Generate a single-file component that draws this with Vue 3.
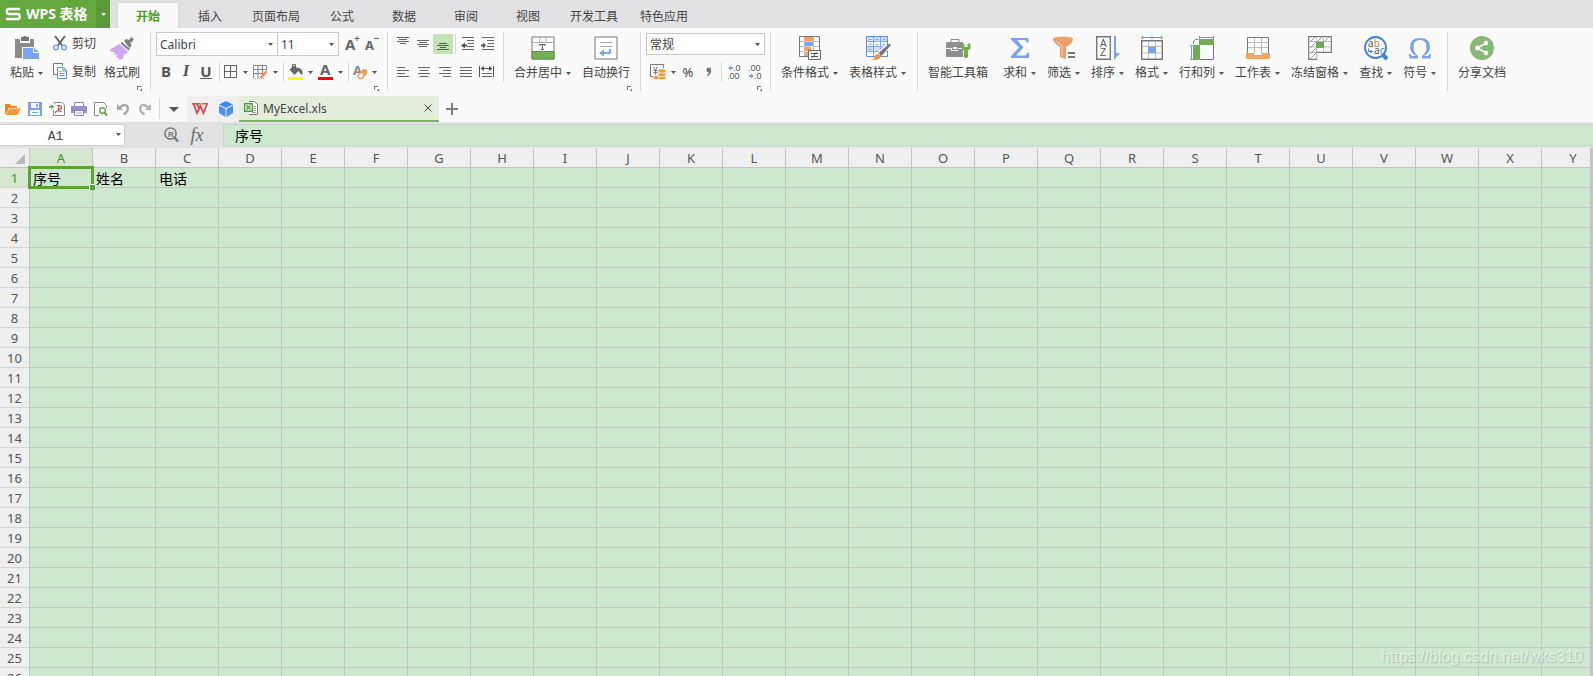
<script setup>
import { h, ref } from 'vue'

const crisp = (s) => `<g shape-rendering="crispEdges">${s}</g>`
const lines = (rows, color = '#666') =>
  crisp(rows.map(([x, y, w]) => `<rect x="${x}" y="${y}" width="${w}" height="1" fill="${color}"/>`).join(''))

const icons = {
  logo: [16, 14, '<path d="M15 2H3.500Q2 2 2 3.500V5.500Q2 7 3.500 7H13Q14.500 7 14.500 8.500V10.500Q14.500 12 13 12H1" fill="none" stroke="#fff" stroke-width="2.400"/>'],
  paste: [24, 24, '<path d="M0 3h5v4h10V3h4v8H7v11H0z" fill="#8b8b8b"/><path d="M6 1h2.500V0h3v1H14v4H6z" fill="#777"/><path d="M8 12h10v5h6v6H8z" fill="#7aa3ef"/><path d="M19 12l5 4h-5z" fill="#7aa3ef"/>'],
  cut: [14, 16, '<path d="M2 1l7.500 10M12 1L4.500 11" stroke="#666" stroke-width="2"/><circle cx="3" cy="12.500" r="2.300" fill="#fafafa" stroke="#7aa3ef" stroke-width="1.500"/><circle cx="11" cy="12.500" r="2.300" fill="#fafafa" stroke="#7aa3ef" stroke-width="1.500"/>'],
  copy: [14, 16, '<path d="M9.500 3V.5h-9v11H4" fill="none" stroke="#777"/><path d="M4.500 4.500h6l3 3v8h-9z" fill="#fff" stroke="#5f8fe0"/><path d="M10 4.500V8h3.500M6.500 8.500h2m-2 2h5m-5 2h5" fill="none" stroke="#5f8fe0"/>'],
  painter: [24, 24, '<path d="M14 5l2-2 3 1 2.500-3L24 3.500 20.500 7l1 3-2 2z" fill="#808080"/><path d="M12 6l8 7-1.500 1.500-8-7z" fill="#808080"/><path d="M9.500 8l8.500 7.500-2.500 3L14 18l-1 4.500L9.500 24 8 21l-2 1 1-4-3 1 .5-3L1 16l-1-2.500z" fill="#cfa6f1"/>'],
  fontUp: [16, 18, '<text x="0" y="15" font-size="15" font-weight="bold" font-family="Noto Sans" fill="#666">A</text><path d="M9.500 3.500h5M12 1v5" stroke="#666" stroke-width="1"/>'],
  fontDown: [16, 18, '<text x="0" y="15" font-size="13" font-weight="bold" font-family="Noto Sans" fill="#666">A</text><path d="M9 3.500h5" stroke="#666"/>'],
  borders: [14, 14, crisp('<path d="M.5.500h12v12H.5zM6.500 1v12M0 6.500h13" fill="none" stroke="#666"/>')],
  tablePen: [15, 14, '<path d="M13.500 5V.5H.5v12.500M5 1v12M9.500 1v9M0 4.500h13M0 8.500h9" fill="none" stroke="#888"/><path d="M2 13.500h9" stroke="#ef8a4b" stroke-dasharray="1 1"/><path d="M14 7l-4.500 5-2 .5.8-2L13 6z" fill="#ef8a4b" stroke="#ef8a4b"/>'],
  fill: [15, 16, '<path d="M1.500 5.500L6 1.500l5.500 4.500-5 5z" fill="#666"/><path d="M4.500 4V.5h3V4" fill="none" stroke="#666"/><path d="M9 3.500Q14 4 14.500 8t-2 2L10 6z" fill="#666"/><path d="M0 13h15v3H0z" fill="#ff0"/>'],
  fontColor: [15, 16, '<text x="2" y="11" font-size="15" font-weight="bold" font-family="Noto Sans" fill="#666">A</text><path d="M0 13h15v3H0z" fill="#f60808"/>'],
  eraser: [14, 16, '<text x="0" y="11" font-size="13" font-family="Noto Sans" font-weight="bold" fill="#888">A</text><path d="M5 11.500l5-5.500h3.500v3L9 14.500H6.500L5 13z" fill="#fafafa" stroke="#eda04c" stroke-width="1.300"/><path d="M8 8.500l3 3 2.500-2.500V6H10z" fill="#eda04c"/>'],
  top: [14, 14, lines([[1, 0, 12], [3, 2, 8], [1, 4, 12], [4, 6, 6]])],
  middle: [14, 14, lines([[1, 3, 12], [3, 5, 8], [1, 7, 12], [3, 9, 8]])],
  bottom: [14, 14, lines([[3, 6, 8], [1, 8, 12], [4, 10, 6], [1, 12, 12]], '#4d6b42')],
  outdent: [14, 14, lines([[1, 0, 12], [6, 3, 7], [7, 6, 6], [6, 9, 7], [1, 12, 12]]) + '<path d="M0 8.500l4-3v2h2v2H4v2z" fill="#555"/>'],
  indent: [14, 14, lines([[1, 0, 12], [6, 3, 7], [7, 6, 6], [6, 9, 7], [1, 12, 12]]) + '<path d="M5 8.500l-3-3v2H0v2h2v2z" fill="#555"/>'],
  left: [14, 14, lines([[1, 2, 8], [1, 5, 12], [1, 8, 8], [1, 11, 12]])],
  center: [14, 14, lines([[1, 2, 12], [3, 5, 8], [1, 8, 12], [3, 11, 8]])],
  right: [14, 14, lines([[1, 2, 12], [5, 5, 8], [1, 8, 12], [5, 11, 8]])],
  justify: [14, 14, lines([[1, 2, 12], [1, 5, 12], [1, 8, 12], [1, 11, 12]])],
  spread: [16, 14, lines([[3, 8, 10], [3, 11, 10]]) + '<path d="M.5 1v11M14.500 1v11M3 3.500h9" stroke="#555"/><path d="M1.500 3.500L5 1v5zM13.500 3.500L10 1v5z" fill="#555"/>'],
  merge: [24, 24, '<path d="M1 1h22v22H1z" fill="#fff" stroke="#777"/><path d="M1 6.500h22M9 1v5.500M15 1v5.500" stroke="#aaa"/><path d="M1 15.500h22V23H1z" fill="#77b058" stroke="#5d9344"/><path d="M9 10V8.500h5V10M11.500 8.500v5M10 13.500h3" fill="none" stroke="#666" stroke-width="1.200"/>'],
  wrap: [24, 24, '<path d="M1 1h22v22H1z" fill="#fff" stroke="#777"/><path d="M6 6.500h12M6 10.500h12" stroke="#aaa"/><path d="M16 13v4h-6" fill="none" stroke="#7aa3ef" stroke-width="2"/><path d="M5 17l5-3.500v7z" fill="#7aa3ef"/>'],
  currency: [16, 16, '<path d="M3 12.500H.5V.5h13V4" fill="none" stroke="#777"/><path d="M3.500 3l2 3 2-3M5.500 6v4.500M3.500 6.500h4M3.500 8.500h4" fill="none" stroke="#777"/><g fill="#ee9c38" stroke="#fafafa" stroke-width=".7"><rect x="8" y="11.500" width="8" height="4" rx="2"/><rect x="3" y="11.500" width="6" height="4" rx="2"/><rect x="8" y="8.500" width="8" height="4" rx="2"/><rect x="8" y="5" width="8" height="4" rx="2"/></g>'],
  comma: [6, 10, '<circle cx="2.800" cy="3" r="2.400" fill="#777"/><path d="M5.200 3Q5.500 7 1.500 9L1 8q2-1.500 2-3z" fill="#777"/>'],
  decMore: [12, 16, '<path d="M0 4l3-2.500V3h2v2H3v1.500z" fill="#7aa3ef"/><text font-size="9" font-family="Liberation Sans" fill="#555"><tspan x="5" y="7">.0</tspan><tspan x="-1" y="15">.00</tspan></text>'],
  decLess: [12, 16, '<path d="M5 12L2 9.500V11H0v2h2v1.500z" fill="#7aa3ef"/><text font-size="9" font-family="Liberation Sans" fill="#555"><tspan x="-1" y="7">.00</tspan><tspan x="5" y="15">.0</tspan></text>'],
  cond: [22, 24, '<path d="M.5.5h20v20H.5z" fill="#fff" stroke="#777"/><path d="M6 1h8v4H6zM6 10.500h6V15H6zM6 16h3v4H6z" fill="#f5a05f"/><path d="M6 5.500h8V10H6z" fill="#79a6f6"/><path d="M5.500 1v19M14.500 1v19M1 5.500h5M14 5.500h6M1 10.500h5M14 10.500h6M1 15.500h5" stroke="#bbb"/><path d="M9.500 14.500h12v9h-12z" fill="#fff" stroke="#666"/><path d="M12 17.500h7M12 20.500h7M17.500 16l-4 6" stroke="#555"/>'],
  tableStyle: [24, 24, '<path d="M.5.500h21v20H.5z" fill="#fff" stroke="#5b8ee6"/><path d="M1 1h20v5H1zM1 11h20v5H1z" fill="#cfe0fb"/><path d="M7.500 1v19M14.500 1v19M1 5.500h20M1 10.500h20M1 15.500h20" stroke="#7fa7ea"/><path d="M2.500 3.500h3M9.500 3.500h3M16.500 3.500h3M2.500 8.500h3M9.500 8.500h3M16.500 8.500h3M2.500 13.500h3" stroke="#7fa7ea"/><path d="M22 10l-8 8" stroke="#fafafa" stroke-width="6"/><path d="M23.500 7.500L25 9l-9.500 11-3-3z" fill="#777"/><path d="M12 17.500l3 3q-2.500 4.500-9 3 3-1 3-4z" fill="#ee9342"/>'],
  toolbox: [24, 24, '<path d="M5 6V3.500h8V6" fill="none" stroke="#888"/><path d="M1 6h16v6H0V7zM0 13h5v2h7v-2h5v8H0z" fill="#8f8f8f"/><path d="M6.500 10.500h5v3h-5z" fill="#fff" stroke="#888"/><path d="M16 8v4.500l2.500 2V21q1.500 1.500 3 0v-6.500l2.500-2V8h-2v3.500h-4V8z" fill="#6fb046" stroke="#6fb046"/>'],
  sum: [18, 24, '<path d="M0 2h17.500v4.500H16Q15.500 4 13 4H6l6.500 7.500L5 19.500h8.500q2.500 0 3-3H18V22H0v-2l8-8.500L0 3.500z" fill="#7aa3ef"/>'],
  filter: [22, 24, '<ellipse cx="10" cy="3" rx="10" ry="2.500" fill="#eda069"/><path d="M0 3q0 4 7 8v10l6 2V11q7-4 7-8z" fill="#eda069"/><path d="M3 5l6 5v10" fill="none" stroke="#f8cfae" stroke-width="1"/><path d="M15 16h7v2h-7zM15 20h7v2h-7z" fill="#777"/>'],
  sort: [24, 24, '<path d="M.7.700h13.600v22.600H.7z" fill="#fff" stroke="#777" stroke-width="1.400"/><text font-size="10" font-family="Liberation Sans" fill="#555"><tspan x="4" y="11">A</tspan><tspan x="4" y="20">Z</tspan></text><path d="M18 0h2v17h4l-6 7z" fill="#7aa3ef"/>'],
  format: [22, 24, '<path d="M0 1.500h22M1.500 0v3M11 0v3M20.500 0v3" stroke="#6c98e8"/><path d="M.7 4.700h20.600v18.600H.7z" fill="#fff" stroke="#777" stroke-width="1.400"/><path d="M7.500 5v18M14.500 5v18M1 10.500h20M1 17h20" stroke="#bbb"/><path d="M7 11h8v6H7z" fill="#76a2f2"/>'],
  rowcol: [24, 24, '<path d="M9 1.500h15M9.500 0v3M23.500 0v3M1.500 9v15M0 9.500h3M0 23.500h3" stroke="#6c98e8"/><path d="M3.500 8V5.500L5.500 3.500H8M10 23.500h13.500V8" fill="none" stroke="#777"/><path d="M9 3h15v6H9zM3 9h7v15H3z" fill="#6fac52"/>'],
  sheet: [24, 24, '<path d="M1.500 17V1.500h21V17" fill="#fff" stroke="#777"/><path d="M2 6.500h20M2 11.500h20M8.500 2v16M15.500 2v16" stroke="#bbb"/><path d="M0 17h8v2h8v-2h8v5l-1 1H1l-1-1z" fill="#f1a368"/>'],
  freeze: [24, 24, '<path d="M.7.700h22.600v15.600H8.500v7H.7z" fill="#fff" stroke="#777" stroke-width="1.200"/><path d="M1 5.500h22M1 11h22M1 16.500h8M8.500 1v22M15.500 1v15" stroke="#bbb"/><path d="M2 6l5-5M9 6l5-5M16 6l5-5M2 12l6-6M2 18l6-6M2 23l6-6" stroke="#888" stroke-width=".8"/><path d="M8 6h8v6H8z" fill="#6fa654"/>'],
  find: [24, 24, '<path d="M18 18l5 5" stroke="#3f7fd0" stroke-width="4"/><circle cx="11.500" cy="11.500" r="10.500" fill="#fff" stroke="#3f7fd0" stroke-width="1.800"/><text font-size="10" font-family="Noto Sans" fill="#555"><tspan x="4" y="11">a</tspan><tspan fill="#d57a38">b</tspan><tspan x="10" y="18">a</tspan><tspan fill="#3f7fd0">c</tspan></text><path d="M4.500 12.500v3H7" fill="none" stroke="#3f7fd0"/><path d="M9 15.500l-2.500-2v4z" fill="#3f7fd0"/>'],
  omega: [22, 24, '<path d="M0 18h1.500q.5 2 2 2H7Q1 16.500 1 11 1 2 11 2t10 9q0 5.500-6 9h3.500q1.500 0 2-2H22l-.5 4.500H13V20q4.500-3 4.500-9 0-7-6.500-7T4.500 11q0 6 4.500 9v2.500H.5z" fill="#7aa3ef"/>'],
  share: [24, 24, '<circle cx="12" cy="12" r="12" fill="#89b777"/><path d="M16 7L7.500 12 16 17" fill="none" stroke="#fff" stroke-width="1.500"/><circle cx="16" cy="7" r="2.200" fill="#fff"/><circle cx="7.500" cy="12" r="2.500" fill="#fff"/><circle cx="16" cy="17" r="2.200" fill="#fff"/>'],
  open: [16, 14, '<path d="M0 2h5l1 2h6v2H4L1 12H0z" fill="#e88a26"/><path d="M4.500 6.500H16L12.500 13H1z" fill="#f39b3b"/>'],
  save: [14, 14, '<path d="M0 0h14v14H0z" fill="#7ba3e8"/><path d="M3 1h8v5H3zM2 8h10v5H2z" fill="#fff"/><path d="M8 2h2v3H8z" fill="#7ba3e8"/><path d="M4 10.500h6" stroke="#7ba3e8"/>'],
  pdf: [16, 14, '<path d="M5.500 2V.5H13l2.500 2.500v10.500H4.500V8" fill="#fff" stroke="#888"/><path d="M0 4h2.500V2L5 4.800 2.500 7.500v-2H0z" fill="#5f9d46"/><path d="M8 3.500h2.500q2 0 2 1.800t-2 1.800H9.500M10 4l-1 5M7 11.500q-1.500-2 1.500-2.500t4 1" fill="none" stroke="#cc4b46" stroke-width="1.200"/>'],
  print: [16, 14, '<path d="M3.500.5h9v4h-9z" fill="#fff" stroke="#8c86c4"/><path d="M0 4h16v7H0z" fill="#9690cf"/><path d="M3.500 8.500h9v5h-9z" fill="#fff" stroke="#8c86c4"/><path d="M5 11h6" stroke="#aaa"/>'],
  preview: [14, 14, '<path d="M5 13.500H.5V.5h9l3 3V6" fill="#fff" stroke="#888"/><circle cx="8.500" cy="8.500" r="2.800" fill="#fff" stroke="#6aa64d" stroke-width="1.400"/><path d="M10.500 10.500L13 13.500" stroke="#6aa64d" stroke-width="2"/>'],
  undo: [12, 14, '<path d="M3 5.500Q8.500.5 10.500 5 12 9.500 6.500 12.500" fill="none" stroke="#a5a5a5" stroke-width="2.400"/><path d="M0 2v6h6z" fill="#a5a5a5"/>'],
  redo: [12, 14, '<path d="M9 5.500Q3.500.5 1.500 5 0 9.500 5.500 12.500" fill="none" stroke="#b0b0b0" stroke-width="2.400"/><path d="M12 2v6H6z" fill="#b0b0b0"/>'],
  wps: [16, 12, '<path d="M0 .8h8.500M10 .8h6" stroke="#e2474a" stroke-width="1.600"/><path d="M1.500 1l3.500 9L8.500 3l3 7L15 1M5 1l2.500 5" fill="none" stroke="#e2474a" stroke-width="1.800"/>'],
  cube: [14, 16, '<path d="M7 0l7 3.500L7 7 0 3.500z" fill="#3e8bf0"/><path d="M0 4.500L6.500 8v8L0 12zM14 4.500L7.500 8v8l6.500-4z" fill="#4a90f5"/>'],
  xls: [14, 14, '<path d="M5 .5h5.500l3 3v10H5" fill="#fff" stroke="#777"/><path d="M9.500 5.500h2.500m-2.500 2h2.500m-2.500 2h2.500m-4 2h4" stroke="#999"/><path d="M.7 2.700h7.600v7.600H.7z" fill="#fff" stroke="#4f9a38" stroke-width="1.400"/><path d="M2.500 4.500l4 4M6.500 4.500l-4 4" stroke="#4f9a38" stroke-width="1.500"/>'],
  close: [8, 8, '<path d="M.5.500l7 7M7.500.500l-7 7" stroke="#444"/>'],
  plus: [12, 12, '<path d="M0 6h12M6 0v12" stroke="#808080" stroke-width="2"/>'],
  search: [15, 15, '<path d="M10 10l4 4.500" stroke="#777" stroke-width="2.400"/><circle cx="6.500" cy="6.500" r="5.600" fill="none" stroke="#777" stroke-width="1.500"/><text x="4" y="10" font-size="8" font-weight="bold" font-family="Liberation Sans" fill="#777">R</text>'],
  launch: [5, 5, crisp('<path d="M.5 4V.5H4" fill="none" stroke="#777"/><path d="M5 2v3H2z" fill="#777"/>')],
  arrow: [5, 3, '<path d="M0 0h5L2.500 3z" fill="#555"/>'],
  bigArrow: [10, 5, '<path d="M0 0h10L5 5z" fill="#555"/>'],
  corner: [10, 10, '<path d="M10 0v10H0z" fill="#b8b8b8"/>'],
}

const Icon = ({ name }) => {
  const [w, ht, body] = icons[name]
  return h('svg', { width: w, height: ht, viewBox: `0 0 ${w} ${ht}`, 'aria-hidden': 'true', class: 'icon', innerHTML: body })
}
Icon.props = ['name']

const tabs = ['开始', '插入', '页面布局', '公式', '数据', '审阅', '视图', '开发工具', '特色应用']
const activeTab = ref('开始')

const fontTools = [
  { icon: 'borders', title: '边框' },
  { icon: 'tablePen', title: '绘图边框' },
  { sep: true },
  { icon: 'fill', title: '填充颜色' },
  { icon: 'fontColor', title: '字体颜色' },
  { sep: true },
  { icon: 'eraser', title: '清除' },
]
const styleTools = [
  { icon: 'cond', label: '条件格式' },
  { icon: 'tableStyle', label: '表格样式' },
]
const editTools = [
  { icon: 'sum', label: '求和' },
  { icon: 'filter', label: '筛选' },
  { icon: 'sort', label: '排序' },
  { icon: 'format', label: '格式' },
  { icon: 'rowcol', label: '行和列' },
  { icon: 'sheet', label: '工作表' },
  { icon: 'freeze', label: '冻结窗格' },
  { icon: 'find', label: '查找' },
  { icon: 'omega', label: '符号' },
]
const quick = ['open', 'save', 'pdf', 'print', 'preview', 'undo', 'redo']
const aligns = ['left', 'center', 'right', 'justify', 'spread']

const columns = Array.from({ length: 25 }, (_, i) => String.fromCharCode(65 + i))
const rowCount = 26
const cells = { A1: '序号', B1: '姓名', C1: '电话' }
const nameBox = ref('A1')
const formula = ref('序号')
</script>

<template>
  <div class="app">
    <header class="titlebar">
      <button class="brand"><Icon name="logo" /><span>WPS 表格</span></button>
      <button class="brand-menu" aria-label="菜单"><Icon name="arrow" /></button>
      <nav class="tabs">
        <button v-for="t in tabs" :key="t" class="tab" :class="{ active: t === activeTab }" @click="activeTab = t">{{ t }}</button>
      </nav>
    </header>

    <section class="ribbon">
      <div class="group clipboard">
        <button class="big"><Icon name="paste" /><span class="cap">粘贴<Icon name="arrow" /></span></button>
        <div class="stack">
          <button class="small"><Icon name="cut" /><span>剪切</span></button>
          <button class="small"><Icon name="copy" /><span>复制</span></button>
        </div>
        <button class="big"><Icon name="painter" /><span class="cap">格式刷</span></button>
        <button class="launch" aria-label="剪贴板设置"><Icon name="launch" /></button>
      </div>

      <div class="group font">
        <div class="row first">
          <span class="combo family"><select aria-label="字体"><option>Calibri</option></select><Icon name="arrow" /></span>
          <span class="combo size"><select aria-label="字号"><option>11</option></select><Icon name="arrow" /></span>
          <button class="grow" aria-label="增大字号"><Icon name="fontUp" /></button>
          <button class="shrink" aria-label="减小字号"><Icon name="fontDown" /></button>
        </div>
        <div class="row tools">
          <div class="biu">
            <button class="bold">B</button><button class="italic">I</button><button class="underline">U</button>
          </div>
          <i class="sep" />
          <template v-for="(t, i) in fontTools" :key="i">
            <i v-if="t.sep" class="sep" />
            <button v-else class="drop" :aria-label="t.title"><Icon :name="t.icon" /><Icon name="arrow" /></button>
          </template>
        </div>
        <button class="launch" aria-label="字体设置"><Icon name="launch" /></button>
      </div>

      <div class="group align short">
        <div class="row first">
          <button class="cell-btn" aria-label="顶端对齐"><Icon name="top" /></button>
          <button class="cell-btn" aria-label="垂直居中"><Icon name="middle" /></button>
          <button class="cell-btn on" aria-label="底端对齐"><Icon name="bottom" /></button>
          <i class="sep" />
          <button class="cell-btn" aria-label="减少缩进"><Icon name="outdent" /></button>
          <button class="cell-btn" aria-label="增加缩进"><Icon name="indent" /></button>
        </div>
        <div class="row second">
          <button v-for="a in aligns" :key="a" class="cell-btn wide" :aria-label="a"><Icon :name="a" /></button>
        </div>
      </div>

      <div class="group merge">
        <button class="big"><Icon name="merge" /><span class="cap">合并居中<Icon name="arrow" /></span></button>
        <button class="big"><Icon name="wrap" /><span class="cap">自动换行</span></button>
        <button class="launch" aria-label="对齐设置"><Icon name="launch" /></button>
      </div>

      <div class="group number">
        <div class="row first">
          <span class="combo numfmt"><select aria-label="数字格式"><option>常规</option></select><Icon name="arrow" /></span>
        </div>
        <div class="row number-tools">
          <button class="drop" aria-label="货币"><Icon name="currency" /><Icon name="arrow" /></button>
          <button class="percent">%</button>
          <button class="comma" aria-label="千位分隔"><Icon name="comma" /></button>
          <i class="sep" />
          <button class="dec" aria-label="增加小数位"><Icon name="decMore" /></button>
          <button class="dec" aria-label="减少小数位"><Icon name="decLess" /></button>
        </div>
        <button class="launch" aria-label="数字设置"><Icon name="launch" /></button>
      </div>

      <div class="group styles">
        <button v-for="t in styleTools" :key="t.label" class="big"><Icon :name="t.icon" /><span class="cap">{{ t.label }}<Icon name="arrow" /></span></button>
      </div>

      <div class="group edit">
        <button class="big toolbox"><Icon name="toolbox" /><span class="cap">智能工具箱</span></button>
        <button v-for="t in editTools" :key="t.label" class="big"><Icon :name="t.icon" /><span class="cap">{{ t.label }}<Icon name="arrow" /></span></button>
      </div>

      <div class="group share">
        <button class="big"><Icon name="share" /><span class="cap">分享文档</span></button>
      </div>
    </section>

    <div class="docbar">
      <div class="quick">
        <button v-for="q in quick" :key="q" :aria-label="q"><Icon :name="q" /></button>
      </div>
      <i class="sep" />
      <button class="more" aria-label="更多"><Icon name="bigArrow" /></button>
      <div class="pinned">
        <button aria-label="WPS"><Icon name="wps" /></button>
        <button aria-label="应用"><Icon name="cube" /></button>
      </div>
      <div class="doc">
        <Icon name="xls" /><span>MyExcel.xls</span>
        <button aria-label="关闭"><Icon name="close" /></button>
      </div>
      <button class="add" aria-label="新建"><Icon name="plus" /></button>
    </div>

    <div class="formula-bar">
      <div class="namebox">
        <input v-model="nameBox" aria-label="名称框" />
        <button aria-label="名称列表"><Icon name="arrow" /></button>
      </div>
      <button class="lookup" aria-label="浏览"><Icon name="search" /></button>
      <button class="fx">fx</button>
      <input v-model="formula" class="formula" aria-label="编辑栏" />
    </div>

    <main class="sheet">
      <div class="viewport">
        <table>
          <thead>
            <tr>
              <th class="corner"><Icon name="corner" /></th>
              <th v-for="c in columns" :key="c" :class="{ current: c === 'A' }">{{ c }}</th>
            </tr>
          </thead>
          <tbody>
            <tr v-for="r in rowCount" :key="r">
              <th :class="{ current: r === 1 }">{{ r }}</th>
              <td v-for="c in columns" :key="c" :class="{ selected: c + r === 'A1' }">{{ cells[c + r] }}</td>
            </tr>
          </tbody>
        </table>
      </div>
      <div class="edge" />
      <div class="watermark">https://blog.csdn.net/wks310</div>
    </main>
  </div>
</template>

<style>
body {
  overflow: hidden;
}
</style>

<style scoped>
.app {
  display: flex;
  flex-direction: column;
  height: 100vh;
  background: #fafafa;
  color: #444;
  font: 12px/16px 'Noto Sans', 'Noto Sans CJK SC', sans-serif;
}
button,
input,
select {
  margin: 0;
  padding: 0;
  border: 0;
  background: none;
  color: inherit;
  font: inherit;
  appearance: none;
  outline: none;
  border-radius: 0;
}
button {
  display: flex;
  align-items: center;
  justify-content: center;
  white-space: nowrap;
  flex: none;
}
.icon {
  display: block;
  flex: none;
  overflow: visible;
}
.sep {
  flex: none;
  width: 1px;
  height: 20px;
  background: #d8d8d8;
}

.titlebar {
  display: flex;
  flex: none;
  height: 28px;
  background: #e2e2e4;
}
.brand {
  width: 96px;
  padding-left: 5px;
  gap: 5px;
  justify-content: flex-start;
  background: #64a83f;
  color: #fff;
  font-size: 14px;
  font-weight: bold;
}
.brand-menu {
  width: 14px;
  margin-right: 8px;
  background: #5b9a3a;
}
.brand-menu :deep(path) {
  fill: #fff;
}
.tabs {
  display: flex;
  padding-top: 3px;
}
.tab {
  min-width: 62px;
  padding: 2px 11px 0;
}
.tab.active {
  min-width: 60px;
  margin-right: 1px;
  background: #fafafa;
  box-shadow: 0 0 2px #c4c4c4;
  clip-path: inset(-2px -2px 0 -2px);
  color: #4a9a25;
  font-weight: bold;
}

.ribbon {
  display: flex;
  flex: none;
  height: 68px;
}
.group {
  position: relative;
  display: flex;
  flex: none;
  box-sizing: border-box;
  height: 68px;
  padding-top: 4px;
}
.group::after {
  content: '';
  position: absolute;
  top: 4px;
  right: 0;
  width: 1px;
  height: 59px;
  background: #d8d8d8;
}
.group.short::after {
  height: 50px;
}
.group.share::after {
  display: none;
}
.big {
  flex-direction: column;
  justify-content: flex-start;
  gap: 5px;
  height: 49px;
  padding-top: 4px;
}
.cap {
  display: flex;
  align-items: center;
  gap: 4px;
}
.clipboard {
  width: 151px;
  padding-left: 10px;
}
.stack {
  display: flex;
  flex-direction: column;
  gap: 12px;
  padding-top: 3px;
  margin: 0 8px 0 10px;
}
.small {
  gap: 5px;
  height: 16px;
}
.small span {
  padding-top: 2px;
}
.launch {
  position: absolute;
  right: 9px;
  bottom: 5px;
}
.font,
.align,
.number {
  flex-direction: column;
  gap: 6px;
}
.row {
  display: flex;
  align-items: center;
  height: 20px;
}
.row.first {
  height: 24px;
}
.font {
  width: 237px;
  padding-left: 5px;
}
.combo {
  display: flex;
  align-items: center;
  box-sizing: border-box;
  height: 24px;
  padding-right: 4px;
  border: 1px solid #c8c8c8;
  background: #fff;
}
.combo select {
  flex: 1;
  min-width: 0;
  height: 22px;
  padding: 2px 0 0 3px;
  font-size: 12px;
}
.family {
  width: 122px;
}
.size {
  width: 62px;
  margin-left: -1px;
}
.grow {
  margin-left: 6px;
}
.shrink {
  margin-left: 4px;
}
.tools {
  gap: 5px;
}
.tools .sep {
  margin-right: -1px;
}
.biu {
  display: flex;
  margin-right: -2px;
}
.biu button {
  width: 20px;
  color: #555;
  font: bold 15px/18px 'Noto Sans', sans-serif;
}
.biu .italic {
  font-family: 'Liberation Serif', serif;
  font-style: italic;
  font-size: 17px;
}
.biu .underline {
  text-decoration: underline;
}
.biu {
  padding-bottom: 2px;
}
.drop {
  gap: 5px;
}
.align {
  width: 116px;
  padding-left: 5px;
}
.row.second {
  margin-left: -1px;
}
.cell-btn {
  width: 20px;
  height: 20px;
}
.cell-btn.on {
  background: #c5e1b7;
}
.cell-btn.wide {
  width: 21px;
}
.align .sep {
  margin: 0 2px;
}
.merge {
  width: 137px;
  gap: 11px;
  padding-left: 10px;
}
.number {
  width: 130px;
  padding-left: 5px;
}
.numfmt {
  width: 119px;
  height: 22px;
}
.numfmt select {
  height: 20px;
}
.number-tools {
  padding-left: 4px;
}
.percent {
  width: 10px;
  margin-left: 7px;
  font-size: 13px;
}
.comma {
  margin-left: 13px;
}
.number-tools .sep {
  margin: 0 6px 0 9px;
}
.dec + .dec {
  margin-left: 9px;
}
.styles {
  width: 147px;
  gap: 11px;
  padding-left: 10px;
}
.edit {
  width: 530px;
  gap: 11px;
  padding-left: 10px;
}
.toolbox {
  margin-right: 4px;
}
.share {
  padding-left: 10px;
}

.docbar {
  display: flex;
  align-items: center;
  flex: none;
  height: 26px;
}
.quick {
  display: flex;
  padding-left: 2px;
}
.quick button {
  width: 22px;
}
.docbar > .sep {
  margin: 0 9px 0 3px;
}
.more {
  width: 10px;
  margin-right: 8px;
}
.pinned {
  display: flex;
  height: 26px;
  background: #f0f0f0;
}
.pinned button {
  width: 26px;
}
.pinned button + button {
  width: 25px;
  margin-right: 1px;
}
.doc {
  display: flex;
  align-items: center;
  box-sizing: border-box;
  width: 200px;
  height: 26px;
  padding: 0 7px 0 5px;
  gap: 5px;
  border-bottom: 2px solid #7fb36a;
  background: #e2eedb;
}
.doc span {
  padding-top: 2px;
}
.doc button {
  margin-left: auto;
}
.add {
  margin-left: 7px;
}

.formula-bar {
  display: flex;
  align-items: center;
  flex: none;
  box-sizing: border-box;
  height: 26px;
  padding-bottom: 1px;
  background: #e2e2e5;
}
.namebox {
  display: flex;
  box-sizing: border-box;
  width: 125px;
  height: 22px;
  padding-right: 3px;
  border: 1px solid #d0d0d0;
  border-left: 0;
  background: #fff;
}
.namebox input {
  flex: 1;
  min-width: 0;
  padding: 3px 5px 0 0;
  text-align: center;
  font: 13px/17px 'Liberation Mono', monospace;
}
.lookup {
  margin-left: 39px;
}
.fx {
  width: 20px;
  margin: 0 16px 0 8px;
  color: #666;
  font: italic 18px/20px 'Liberation Serif', serif;
}
.formula {
  flex: 1;
  box-sizing: border-box;
  height: 22px;
  padding-left: 11px;
  border: 1px solid #cfcfcf;
  border-right: 0;
  background: #cce8cf;
  color: #000;
  font: 14px/20px 'Noto Sans CJK SC', sans-serif;
}

.sheet {
  position: relative;
  display: flex;
  flex: 1;
  min-height: 0;
}
.viewport {
  flex: 1;
  min-width: 0;
  overflow: hidden;
  background: #cce8cf;
}
.edge {
  width: 3px;
  background: #c4c4c4;
}
table {
  width: 1605px;
  table-layout: fixed;
  border-collapse: separate;
  border-spacing: 0;
}
th,
td {
  box-sizing: border-box;
  width: 63px;
  height: 20px;
  padding: 0;
  border-right: 1px solid #c4c4c4;
  border-bottom: 1px solid #c4c4c4;
  white-space: nowrap;
}
th {
  background: #efefef;
  color: #555;
  font: 13px/18px 'Noto Sans', sans-serif;
}
thead th:first-child,
tbody th {
  width: 30px;
}
tbody th {
  padding-top: 2px;
  border-bottom-color: #d4d4d4;
  line-height: 17px;
}
th.current {
  background: #d6e7cf;
  color: #3f9420;
}
.corner .icon {
  margin: 2px 0 0 15px;
}
td {
  position: relative;
  padding: 2px 0 0 3px;
  color: #000;
  font: 14px/17px 'Noto Sans CJK SC', sans-serif;
}
.selected::before {
  content: '';
  position: absolute;
  inset: -2px;
  border: 3px solid #5aa532;
}
.selected::after {
  content: '';
  position: absolute;
  right: -3px;
  bottom: -3px;
  z-index: 1;
  width: 5px;
  height: 5px;
  border: solid #e6f4e6;
  border-width: 1px 0 0 1px;
  background: #5aa532;
}
.watermark {
  position: absolute;
  right: 10px;
  bottom: 10px;
  color: rgba(255, 255, 255, 0.6);
  font: 16px/18px 'Liberation Sans', sans-serif;
  text-shadow: 1px 1px 1px rgba(120, 140, 120, 0.45);
}
</style>
